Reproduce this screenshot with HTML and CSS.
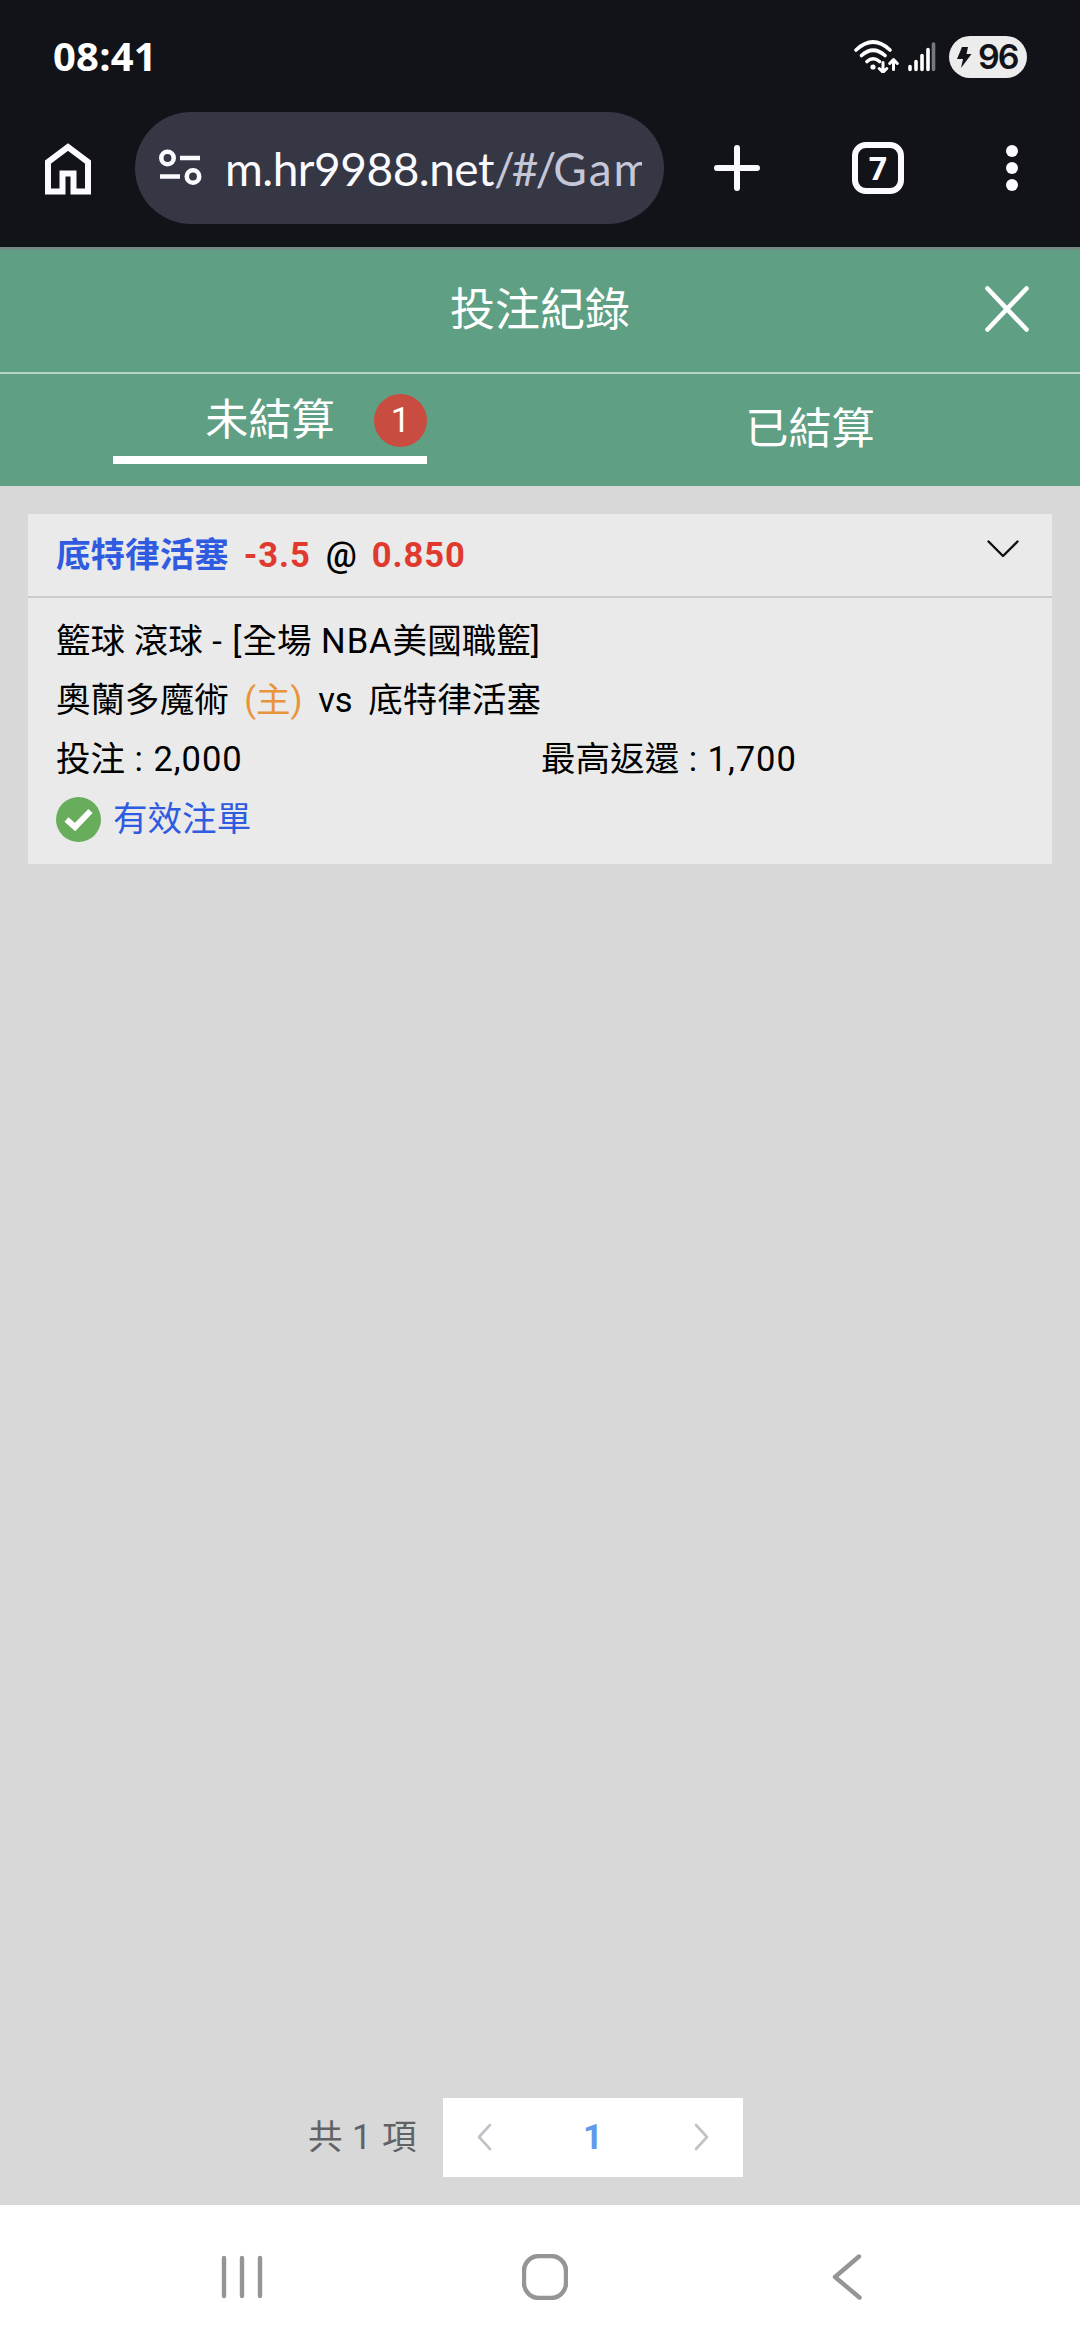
FILE: index.html
```html
<!DOCTYPE html>
<html lang="zh-Hant">
<head>
<meta charset="utf-8">
<title>投注紀錄</title>
<link rel="stylesheet" href="styles.css">
</head>
<body>
<div class="screen">
  <div class="status-bar">
    <span class="clock">08:41</span>
    <div class="status-icons">
      <svg class="wifi" width="46" height="34" viewBox="0 0 46 34" fill="none" stroke="#fff" stroke-width="3.6" stroke-linecap="round" stroke-linejoin="round">
        <path d="M2 11Q19 -5 36 11M7.500 16.500Q19 6 31 16.500M13 22.500Q19 17 25.500 22.500"/>
        <circle cx="19" cy="28" r="2.600" fill="#fff" stroke="none"/>
        <path stroke-width="3" d="M29 23.500V33M25.200 29.500L29 33.200L32.800 29.500M39.500 30.500V21M35.700 24.500L39.500 20.500L43.300 24.500"/>
      </svg>
      <svg class="signal" width="28" height="30" viewBox="0 0 28 30" stroke="#fff" stroke-width="3.600" stroke-linecap="round">
        <path d="M2 24.500V27.500M8 19.500V27.500M14 13.500V27.500M20 7.500V27.500"/>
        <path stroke="#77787b" d="M25.500 2V27.500"/>
      </svg>
      <div class="battery">
        <svg width="15" height="21" viewBox="0 0 15 21" fill="#121318"><path d="M5 0H11L9.500 7H14.500L4 21L6 12H0Z"/></svg>
        <span>96</span>
      </div>
    </div>
  </div>

  <div class="browser-bar">
    <svg class="home" width="46" height="52" viewBox="0 0 46 52" fill="none" stroke="#fbfaff" stroke-width="6"><path d="M3 48.500V19L23 4L43 19V48.500H28.500V30.500H17.500V48.500Z"/></svg>
    <div class="address">
      <svg width="43" height="38" viewBox="0 0 43 38" fill="none" stroke="#fbfaff" stroke-width="4.600"><circle cx="8.500" cy="9" r="6.200"/><path d="M21 9H41M1 27.500H21"/><circle cx="34" cy="27.500" r="6.200"/></svg>
      <div class="url">m.hr9988.net<span class="path"><span class="slashes">/#/</span>Gam</span></div>
    </div>
    <svg class="plus" width="46" height="46" viewBox="0 0 46 46" stroke="#fbfaff" stroke-width="6" stroke-linecap="round"><path d="M23 3V43M3 23H43"/></svg>
    <div class="tab-count">7</div>
    <svg class="dots" width="12" height="46" viewBox="0 0 12 46" fill="#fbfaff"><circle cx="6" cy="6" r="6"/><circle cx="6" cy="23" r="6"/><circle cx="6" cy="40" r="6"/></svg>
  </div>

  <header class="title-bar">
    <h1>投注紀錄</h1>
    <svg class="close" width="44" height="46" viewBox="0 0 44 46" stroke="#fff" stroke-width="4.600" stroke-linecap="round"><path d="M2.500 2.500L41.500 43.500M41.500 2.500L2.500 43.500"/></svg>
  </header>

  <nav class="tabs">
    <div class="tab active"><span>未結算</span><b class="badge">1</b></div>
    <div class="tab"><span>已結算</span></div>
  </nav>

  <main class="content">
    <article class="card">
      <div class="card-head">
        <div class="pick"><span class="team">底特律活塞</span><span class="red num">-3.5</span><span class="at">@</span><span class="red num">0.850</span></div>
        <svg class="chevron" width="32" height="18" viewBox="0 0 32 18" fill="none" stroke="#111" stroke-width="2.400" stroke-linecap="round" stroke-linejoin="round"><path d="M1.500 1.500L16 16L30.500 1.500"/></svg>
      </div>
      <div class="card-body">
        <div class="line">籃球 滾球<span class="num"> - [</span>全場<span class="num"> NBA</span>美國職籃]</div>
        <div class="line match"><span>奧蘭多魔術</span><span class="host">(主)</span><span>vs</span><span>底特律活塞</span></div>
        <div class="line amounts"><span>投注<span class="num"> : 2,000</span></span><span>最高返還<span class="num"> : 1,700</span></span></div>
        <div class="line valid">
          <svg width="45" height="45" viewBox="0 0 45 45"><circle cx="22.500" cy="22.500" r="22.500" fill="#67ad5b"/><path d="M10.500 22.500L19 30L34.500 14" fill="none" stroke="#fff" stroke-width="6"/></svg>
          <span>有效注單</span>
        </div>
      </div>
    </article>
    <div class="pager">
      <span class="total">共<span class="num"> 1 </span>項</span>
      <div class="pages">
        <svg width="15" height="28" viewBox="0 0 15 28"><path d="M13 2L2 14L13 26"/></svg>
        <b>1</b>
        <svg width="15" height="28" viewBox="0 0 15 28"><path d="M2 2L13 14L2 26"/></svg>
      </div>
    </div>
  </main>

  <footer class="system-nav">
    <svg width="42" height="46" viewBox="0 0 42 46"><path d="M3 4V42M21 4V42M39 4V42"/></svg>
    <svg class="nav-home" width="46" height="46" viewBox="0 0 46 46"><rect x="2" y="2" width="42" height="42" rx="15"/></svg>
    <svg width="30" height="46" viewBox="0 0 30 46"><path d="M27 2.500L3 23L27.500 43.500"/></svg>
  </footer>
</div>
</body>
</html>
```

FILE: styles.css
```css
* { box-sizing: border-box; }
body { margin: 0; }
svg { display: block; flex: none; }

.screen {
  width: 1080px;
  height: 2340px;
  display: flex;
  flex-direction: column;
  overflow: hidden;
  background: #d8d8d8;
  color: #000;
  font-family: Roboto, "Noto Sans CJK TC", sans-serif;
  font-size: 34.56px;
}
.num { letter-spacing: 0.95px; }

.status-bar {
  height: 112px;
  padding: 0 53px;
  display: flex;
  justify-content: space-between;
  background: #121318;
}
.clock {
  padding-top: 29px;
  color: #fff;
  font: 700 40px/54px "Open Sans", "Noto Sans", sans-serif;
  letter-spacing: 0.2px;
}
.status-icons { display: flex; height: 42px; margin-top: 36px; }
.wifi { margin: 3px 8px 0 0; }
.signal { margin: 6px 13px 0 0; }
.battery {
  width: 78px;
  height: 42px;
  border-radius: 21px;
  background: #ececec;
  color: #121318;
  display: flex;
  align-items: center;
  gap: 6px;
  padding-left: 8px;
  font: 600 34px/42px Inter, sans-serif;
  letter-spacing: -2px;
}

.browser-bar {
  height: 135px;
  padding-left: 45px;
  display: flex;
  align-items: flex-start;
  background: #121318;
}
.home { margin: 31px 44px 0 0; }
.address {
  width: 529px;
  height: 112px;
  border-radius: 56px;
  background: #353745;
  display: flex;
  align-items: center;
  padding-left: 24px;
}
.url {
  width: 417px;
  margin-left: 23px;
  padding-top: 1px;
  overflow: hidden;
  white-space: nowrap;
  color: #fbfaff;
  font: 400 46px/60px Lato, sans-serif;
  letter-spacing: -0.5px;
}
.path { color: #c5c6d8; letter-spacing: 2px; }
.slashes { letter-spacing: -3px; }
.plus { margin: 33px 92px 0 50px; }
.tab-count {
  width: 52px;
  height: 52px;
  margin-top: 30px;
  border: 6px solid #fbfaff;
  border-radius: 14px;
  color: #fbfaff;
  text-align: center;
  font: 700 32px/40px "Open Sans", sans-serif;
}
.dots { margin: 33px 0 0 102px; }

.title-bar {
  height: 127px;
  border-top: 3px solid #758a85;
  border-bottom: 2px solid #b9d3c6;
  background: #5fa085;
  color: #fff;
  display: grid;
  grid-template-columns: 1fr auto 1fr;
  align-items: center;
}
h1 { grid-column: 2; margin: 0; font-size: 45px; line-height: 60px; font-weight: 400; }
.close { justify-self: end; margin: 0 51px 5px 0; }

.tabs {
  height: 112px;
  background: #5fa085;
  color: #fff;
  display: flex;
  font-size: 43.2px;
}
.tab { flex: 1; display: flex; justify-content: center; align-items: center; padding-bottom: 11px; }
.tab.active {
  flex: none;
  width: 314px;
  height: 90px;
  margin: 0 113px;
  padding: 2px 0 0;
  border-bottom: 8px solid #fff;
  display: grid;
  grid-template-columns: 1fr auto 1fr;
}
.tab.active span { grid-column: 2; }
.badge {
  justify-self: end;
  width: 53px;
  height: 53px;
  margin-top: 8px;
  border-radius: 50%;
  background: #c94c41;
  text-align: center;
  font-weight: 400;
  font-size: 34.56px;
  line-height: 52px;
}

.content { flex: 1; padding: 28px 28px 0; display: flex; flex-direction: column; }
.card { height: 350px; background: #eaeaea; }
.card-head {
  height: 84px;
  border-bottom: 2px solid #cbcbcb;
  padding: 0 33px 0 28px;
  display: flex;
  align-items: center;
  justify-content: space-between;
}
.pick { display: flex; align-items: baseline; gap: 15px; padding-bottom: 7px; font-weight: 700; }
.team { color: #2f5be0; }
.red { color: #e03a2f; }
.at { font-weight: 500; }
.chevron { margin-bottom: 12px; }
.card-body { padding: 14px 28px 0 28px; }
.line { height: 59px; line-height: 59px; }
.match { display: flex; gap: 15.5px; }
.host { color: #e8943a; }
.amounts { display: grid; grid-template-columns: 485px 1fr; }
.valid { display: flex; align-items: center; height: 61px; gap: 12px; color: #2f5be0; }

.pager {
  margin: auto 0 28px;
  padding-left: 280px;
  display: flex;
  align-items: center;
  gap: 28px;
}
.total { color: #606266; width: 107px; padding-bottom: 7px; white-space: nowrap; }
.pages {
  width: 300px;
  height: 79px;
  padding: 0 34px 2px;
  background: #fff;
  color: #5f9bea;
  display: flex;
  align-items: center;
  justify-content: space-between;
}
.pages svg { fill: none; stroke: #c0c2c8; stroke-width: 2.6; stroke-linecap: round; stroke-linejoin: round; }

.system-nav {
  height: 135px;
  padding: 49px 218px 0 221px;
  background: #fff;
  display: flex;
  justify-content: space-between;
}
.system-nav svg { fill: none; stroke: #959595; stroke-width: 4.4; stroke-linecap: round; stroke-linejoin: round; }
.system-nav .nav-home { margin: 0 6px 0 0; }
```
